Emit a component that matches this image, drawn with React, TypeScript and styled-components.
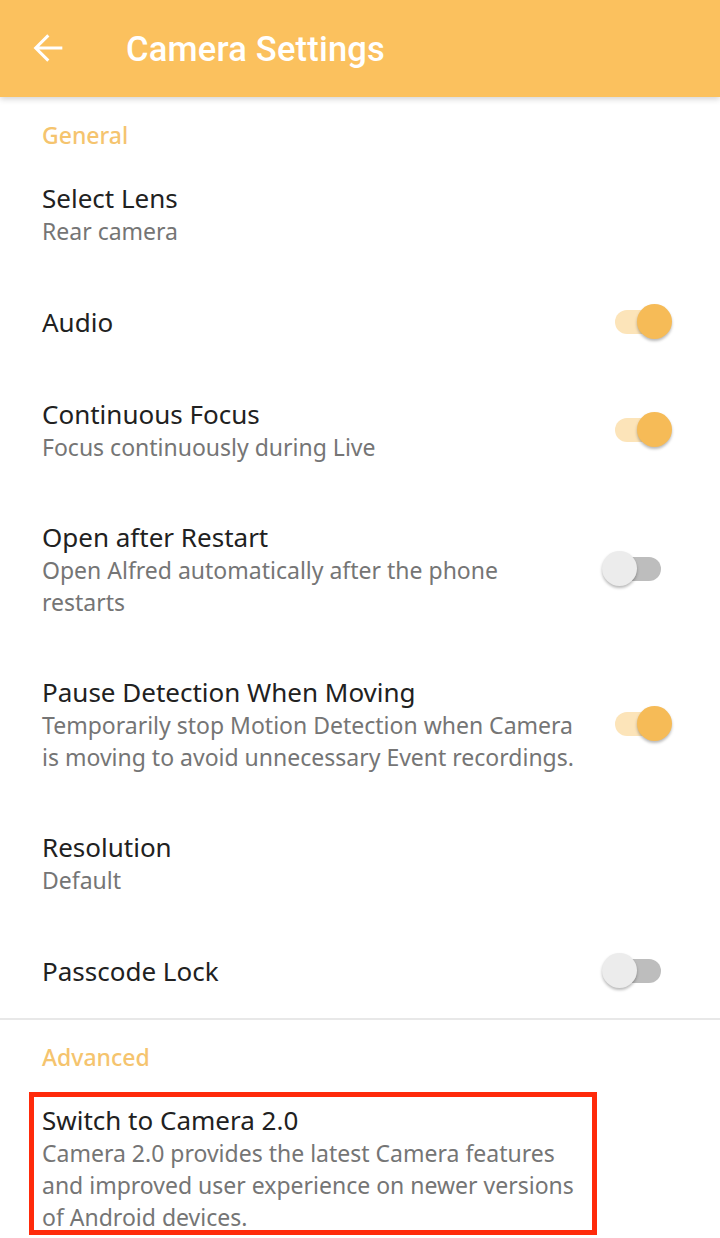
import { createGlobalStyle, styled } from 'styled-components';

interface Setting {
  title: string;
  subtitle?: string;
  toggle?: boolean;
}

const general: Setting[] = [
  { title: 'Select Lens', subtitle: 'Rear camera' },
  { title: 'Audio', toggle: true },
  {
    title: 'Continuous Focus',
    subtitle: 'Focus continuously during Live',
    toggle: true,
  },
  {
    title: 'Open after Restart',
    subtitle: 'Open Alfred automatically after the phone restarts',
    toggle: false,
  },
  {
    title: 'Pause Detection When Moving',
    subtitle:
      'Temporarily stop Motion Detection when Camera is moving to avoid unnecessary Event recordings.',
    toggle: true,
  },
  { title: 'Resolution', subtitle: 'Default' },
  { title: 'Passcode Lock', toggle: false },
];

const GlobalStyle = createGlobalStyle`
  body {
    margin: 0;
    background: #ffffff;
    font-family: "Noto Sans", "Open Sans", sans-serif;
  }
`;

const Switch = ({ on }: { on: boolean }) => (
  <SwitchWrapper>
    <Track $on={on} />
    <Thumb $on={on} />
  </SwitchWrapper>
);

const Row = ({ title, subtitle, toggle }: Setting) => (
  <RowWrapper>
    <TextBlock>
      <Title>{title}</Title>
      {subtitle && <Subtitle>{subtitle}</Subtitle>}
    </TextBlock>
    {toggle !== undefined && <Switch on={toggle} />}
  </RowWrapper>
);

const App = () => {
  return (
    <Page>
      <GlobalStyle />
      <AppBar>
        <BackButton>
          <svg width="40" height="40" viewBox="0 0 24 24" fill="none">
            <path
              d="M20 12H4.6M11.6 4.4L4 12l7.6 7.6"
              stroke="#ffffff"
              strokeWidth="1.8"
            />
          </svg>
        </BackButton>
        <BarTitle>Camera Settings</BarTitle>
      </AppBar>

      <SectionHeader>General</SectionHeader>
      {general.map((item) => (
        <Row key={item.title} {...item} />
      ))}

      <Divider />

      <SectionHeader $top={21} $height={72}>
        Advanced
      </SectionHeader>
      <Highlight>
        <TextBlock>
          <Title>Switch to Camera 2.0</Title>
          <Subtitle>
            Camera 2.0 provides the latest Camera features and improved user
            experience on newer versions of Android devices.
          </Subtitle>
        </TextBlock>
      </Highlight>
    </Page>
  );
};

const Page = styled.div`
  width: 720px;
  height: 1238px;
  overflow: hidden;
  background: #ffffff;
`;

const AppBar = styled.header`
  position: relative;
  z-index: 1;
  display: flex;
  align-items: center;
  height: 97px;
  background: #fbc15e;
  box-shadow: 0 2px 6px rgba(0, 0, 0, 0.18);
`;

const BackButton = styled.div`
  display: flex;
  align-items: center;
  justify-content: center;
  width: 40px;
  height: 40px;
  margin-left: 29px;
  margin-top: -1px;
`;

const BarTitle = styled.h1`
  margin: 0 0 0 57px;
  color: #ffffff;
  font-family: Roboto, "Noto Sans", sans-serif;
  font-size: 34.5px;
  font-weight: 500;
  letter-spacing: 0.2px;
`;

const SectionHeader = styled.div<{ $top?: number; $height?: number }>`
  box-sizing: border-box;
  height: ${({ $height }) => $height ?? 56}px;
  padding: ${({ $top }) => $top ?? 22}px 42px 0;
  color: #f5c46e;
  font-size: 23px;
  font-weight: 500;
  line-height: 32px;
`;

const RowWrapper = styled.div`
  display: flex;
  align-items: center;
  column-gap: 20px;
  padding: 28px 48px 29px 42px;
`;

const TextBlock = styled.div`
  display: flex;
  flex-direction: column;
  flex: 1;
  max-width: 540px;
`;

const Title = styled.div`
  color: #212121;
  font-size: 26px;
  line-height: 34px;
`;

const Subtitle = styled.div`
  color: #757575;
  font-size: 23px;
  line-height: 32px;
`;

const SwitchWrapper = styled.div`
  position: relative;
  flex-shrink: 0;
  width: 70px;
  height: 36px;
`;

const Track = styled.div<{ $on: boolean }>`
  position: absolute;
  left: 13px;
  top: 6px;
  width: 46px;
  height: 24px;
  border-radius: 12px;
  background: ${({ $on }) => ($on ? '#fce4b9' : '#bdbdbd')};
`;

const Thumb = styled.div<{ $on: boolean }>`
  position: absolute;
  top: 0;
  left: ${({ $on }) => ($on ? 35 : 0)}px;
  width: 35px;
  height: 35px;
  border-radius: 50%;
  background: ${({ $on }) => ($on ? '#f6bb57' : '#ececec')};
  box-shadow: 0 2px 3px rgba(0, 0, 0, 0.28);
`;

const Divider = styled.div`
  height: 2px;
  background: #e8e8e8;
`;

const Highlight = styled.div`
  box-sizing: border-box;
  width: 568px;
  height: 143px;
  margin-left: 29px;
  padding: 6px 0 0 8px;
  border: 5px solid #ff2a0a;
`;

export default App;
